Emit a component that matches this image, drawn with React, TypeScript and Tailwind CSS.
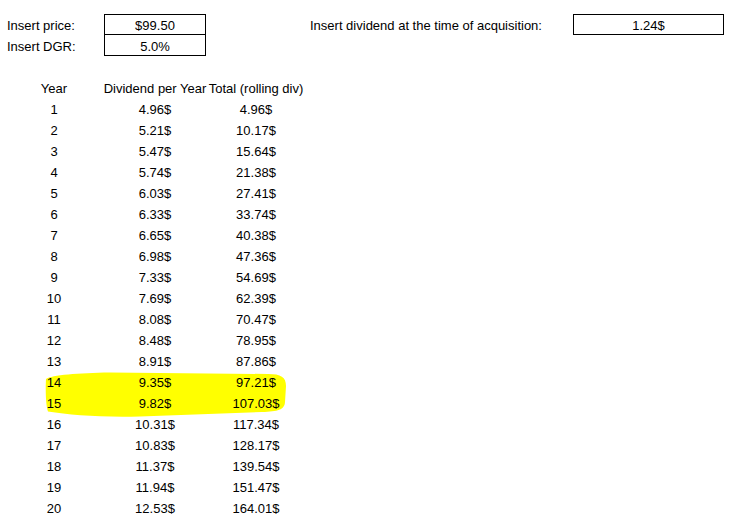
const ROWS: [number, string, string][] = [
  [1, "4.96$", "4.96$"],
  [2, "5.21$", "10.17$"],
  [3, "5.47$", "15.64$"],
  [4, "5.74$", "21.38$"],
  [5, "6.03$", "27.41$"],
  [6, "6.33$", "33.74$"],
  [7, "6.65$", "40.38$"],
  [8, "6.98$", "47.36$"],
  [9, "7.33$", "54.69$"],
  [10, "7.69$", "62.39$"],
  [11, "8.08$", "70.47$"],
  [12, "8.48$", "78.95$"],
  [13, "8.91$", "87.86$"],
  [14, "9.35$", "97.21$"],
  [15, "9.82$", "107.03$"],
  [16, "10.31$", "117.34$"],
  [17, "10.83$", "128.17$"],
  [18, "11.37$", "139.54$"],
  [19, "11.94$", "151.47$"],
  [20, "12.53$", "164.01$"],
];

function Cell({ children, className = "" }: { children?: React.ReactNode; className?: string }) {
  return <div className={`h-[21px] flex items-end pb-[2px] leading-[15px] whitespace-nowrap ${className}`}>{children}</div>;
}

export default function App() {
  return (
    <div className="relative w-[737px] h-[519px] overflow-hidden bg-white text-[13px] text-black font-['Liberation_Sans',Arial,sans-serif]">
      {/* marker highlight over years 14-15 */}
      <svg className="absolute left-0 top-0" width="737" height="519" viewBox="0 0 737 519">
        <path
          d="M46,379 C52,375 78,373 110,372.5 L268,374 C281,374 286,377 286,386 L285,402 C284.5,410 278,411.5 262,412 L140,416.5 C100,417.5 70,415 48,411.5 C45.5,404 45.5,388 46,379 Z"
          fill="#ffff00"
        />
      </svg>

      <div className="relative pl-[4px] pt-[14px]">
        {/* inputs */}
        <div className="flex">
          <div className="grid grid-cols-[100px_102px]">
            <Cell className="pl-[3px]">Insert price:</Cell>
            <Cell className="justify-center border border-black !pb-[1px] leading-[14px]">$99.50</Cell>
            <Cell className="pl-[3px]">Insert DGR:</Cell>
            <Cell className="justify-center border border-t-0 border-black !pb-[1px] leading-[14px]">5.0%</Cell>
          </div>
          <div className="ml-[100px] flex items-start">
            <Cell className="w-[267px] pl-[4px]">Insert dividend at the time of acquisition:</Cell>
            <Cell className="w-[151px] justify-center border border-black !pb-[1px] leading-[14px]">1.24$</Cell>
          </div>
        </div>

        <div className="h-[21px]" />

        {/* table */}
        <div className="grid grid-cols-[100px_102px_100px]">
          <Cell className="justify-center">Year</Cell>
          <Cell className="justify-center">Dividend per Year</Cell>
          <Cell className="justify-center">Total (rolling div)</Cell>
          {ROWS.map(([y, d, t]) => (
            <div key={y} className="contents">
              <Cell className="justify-center">{y}</Cell>
              <Cell className="justify-center">{d}</Cell>
              <Cell className="justify-center">{t}</Cell>
            </div>
          ))}
        </div>
      </div>
    </div>
  );
}
